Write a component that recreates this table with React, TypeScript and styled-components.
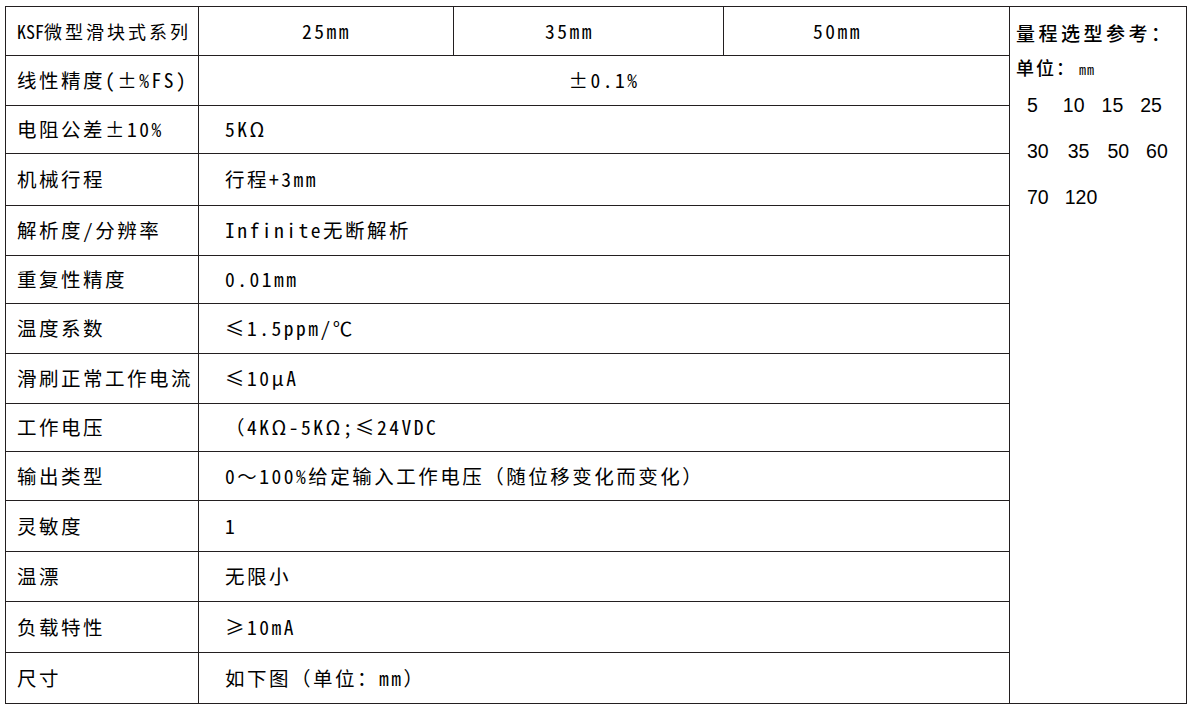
import React from "react";
import styled, { createGlobalStyle } from "styled-components";

const GlobalStyle = createGlobalStyle`
  html, body {
    margin: 0;
    padding: 0;
    background: #ffffff;
  }
  body {
    font-family: "Noto Sans Mono CJK SC", "Noto Sans CJK SC", sans-serif;
    color: #000;
  }
`;

const LINE = "#231f20";

const Page = styled.div`
  padding: 6px 0 0 5px;
  width: 1187px;
  height: 710px;
  box-sizing: border-box;
`;

const Sheet = styled.div`
  display: grid;
  grid-template-columns: 193px 255px 270px 286px 177px;
  grid-template-rows: 49px 50px 48px 52px 50px 48px 50px 50px 48px 49px 51px 50px 51px 51px;
  border-top: 1px solid ${LINE};
  border-left: 1px solid ${LINE};
  width: fit-content;
`;

const Cell = styled.div`
  box-sizing: content-box;
  border-right: 1px solid ${LINE};
  border-bottom: 1px solid ${LINE};
  display: flex;
  align-items: center;
  font-family: "Noto Sans Mono CJK SC", "Noto Sans CJK SC", sans-serif;
  font-weight: 500;
  font-size: 19.5px;
  letter-spacing: 2.5px;
  line-height: 1;
  white-space: nowrap;
  padding-bottom: 1px;
`;

const LabelCell = styled(Cell)<{ $compact?: boolean }>`
  padding-left: 11px;
  font-size: ${(p) => (p.$compact ? 18 : 19.5)}px;
  letter-spacing: ${(p) => (p.$compact ? 3 : 2.5)}px;
`;

const Tight = styled.span`
  letter-spacing: 0;
`;

const HeaderValue = styled(Cell)<{ $indent: number }>`
  padding-left: ${(p) => p.$indent}px;
`;

const ValueCell = styled(Cell)<{ $centered?: boolean }>`
  grid-column: 2 / 5;
  padding-left: ${(p) => (p.$centered ? 0 : 26)}px;
  justify-content: ${(p) => (p.$centered ? "center" : "flex-start")};
`;

const SidePanel = styled.div`
  grid-column: 5;
  grid-row: 1 / 15;
  border-right: 1px solid ${LINE};
  border-bottom: 1px solid ${LINE};
  display: flex;
  flex-direction: column;
  padding: 13px 0 0 6px;
`;

const SideHeading = styled.div`
  font-family: "Noto Sans CJK SC", sans-serif;
  font-weight: 500;
  font-size: 19px;
  letter-spacing: 3.5px;
  line-height: 26px;
  white-space: nowrap;
`;

const UnitLine = styled.div`
  font-family: "Noto Sans CJK SC", sans-serif;
  font-weight: 500;
  font-size: 18px;
  letter-spacing: 2px;
  line-height: 26px;
  margin-top: 8px;
  white-space: nowrap;
`;

const UnitSmall = styled.span`
  font-family: "Noto Sans Mono CJK SC", "Noto Sans CJK SC", sans-serif;
  font-size: 14px;
  letter-spacing: 1px;
  margin-left: 3px;
`;

const Numbers = styled.div`
  margin-top: 0;
  padding-left: 11px;
  display: flex;
  flex-direction: column;
`;

const NumberRow = styled.div`
  display: flex;
  font-family: "Liberation Sans", Arial, sans-serif;
  font-size: 19.5px;
  line-height: 46px;
  white-space: nowrap;
`;

const Num = styled.span<{ $gap: number }>`
  margin-left: ${(p) => p.$gap}px;
`;

const sizes: { n: string; gap: number }[][] = [
  [
    { n: "5", gap: 0 },
    { n: "10", gap: 25 },
    { n: "15", gap: 17 },
    { n: "25", gap: 17 },
  ],
  [
    { n: "30", gap: 0 },
    { n: "35", gap: 19 },
    { n: "50", gap: 18 },
    { n: "60", gap: 17 },
  ],
  [
    { n: "70", gap: 0 },
    { n: "120", gap: 16 },
  ],
];

const rows: { label: string; value: string; centered?: boolean }[] = [
  { label: "线性精度(±%FS)", value: "±0.1%", centered: true },
  { label: "电阻公差±10%", value: "5KΩ" },
  { label: "机械行程", value: "行程+3mm" },
  { label: "解析度/分辨率", value: "Infinite无断解析" },
  { label: "重复性精度", value: "0.01mm" },
  { label: "温度系数", value: "≤1.5ppm/℃" },
  { label: "滑刷正常工作电流", value: "≤10μA" },
  { label: "工作电压", value: "（4KΩ-5KΩ;≤24VDC" },
  { label: "输出类型", value: "0～100%给定输入工作电压（随位移变化而变化）" },
  { label: "灵敏度", value: "1" },
  { label: "温漂", value: "无限小" },
  { label: "负载特性", value: "≥10mA" },
  { label: "尺寸", value: "如下图（单位：mm）" },
];

export default function App() {
  return (
    <Page>
      <GlobalStyle />
      <Sheet>
        <LabelCell $compact>
          <Tight>KSF</Tight>微型滑块式系列
        </LabelCell>
        <HeaderValue $indent={103}>25mm</HeaderValue>
        <HeaderValue $indent={91}>35mm</HeaderValue>
        <HeaderValue $indent={89}>50mm</HeaderValue>
        <SidePanel>
          <SideHeading>量程选型参考：</SideHeading>
          <UnitLine>
            单位：<UnitSmall>mm</UnitSmall>
          </UnitLine>
          <Numbers>
            {sizes.map((line, i) => (
              <NumberRow key={i}>
                {line.map((it) => (
                  <Num key={it.n} $gap={it.gap}>
                    {it.n}
                  </Num>
                ))}
              </NumberRow>
            ))}
          </Numbers>
        </SidePanel>
        {rows.map((r) => (
          <React.Fragment key={r.label}>
            <LabelCell>{r.label}</LabelCell>
            <ValueCell $centered={r.centered}>{r.value}</ValueCell>
          </React.Fragment>
        ))}
      </Sheet>
    </Page>
  );
}
